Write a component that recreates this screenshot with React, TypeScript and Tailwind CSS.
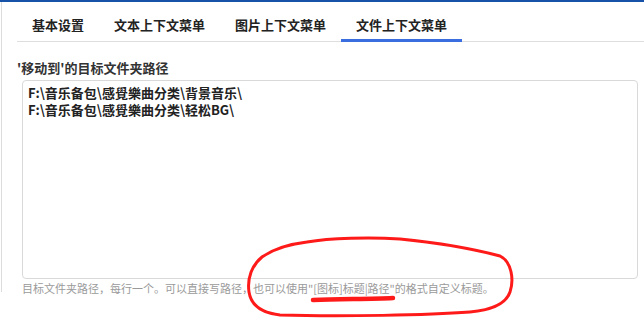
import React from 'react';

const tabs = ['基本设置', '文本上下文菜单', '图片上下文菜单', '文件上下文菜单'];
const active = 3;

const paths = 'F:\\音乐备包\\感覺樂曲分类\\背景音乐\\\nF:\\音乐备包\\感覺樂曲分类\\轻松BG\\';

export default function App() {
  return (
    <div className="relative w-[644px] h-[318px] overflow-hidden bg-white font-['Noto_Sans_CJK_SC','Microsoft_YaHei',sans-serif] text-[#222]">
      <div className="h-[2px] bg-[#1552a8]" />
      <div className="ml-[1px] h-[290px] border-l border-[#dcdcdc] pl-[15px]">
        <div className="flex border-b border-[#dedede]">
          {tabs.map((t, i) => (
            <div key={t} className="relative flex h-[39px] items-center px-[15px] pt-[6px] text-[13px] font-bold leading-[17px]">
              {t}
              {i === active && <div className="absolute left-0 right-0 bottom-[-1px] h-[3px] bg-[#3a6ee0]" />}
            </div>
          ))}
        </div>

        <div className="mt-[17px] text-[13px] font-bold leading-[17px] text-[#333]">'移动到'的目标文件夹路径</div>

        <textarea
          readOnly
          value={paths}
          className="mt-[4px] ml-[5px] block h-[199px] w-[616px] resize-none rounded-[4px] border border-[#d9d9d9] px-[5px] pt-[3px] text-[13px] font-bold leading-[17px] text-[#222] outline-none"
        />

        <div className="mt-[2px] ml-[5px] text-[11px] leading-[15px] text-[#9a9a9a] whitespace-nowrap">
          目标文件夹路径，每行一个。可以直接写路径，也可以使用"[图标]标题|路径"的格式自定义标题。
        </div>
      </div>

      {/* red hand-drawn annotation */}
      <svg className="absolute left-0 top-0 pointer-events-none" width="644" height="318" viewBox="0 0 644 318">
        <path
          d="M307 242 C330 238 370 237 400 239 C430 242 470 248 500 256 C512 262 514 280 510 292 C506 304 492 310 470 312 C430 315 340 317 280 315 C262 313 251 305 249 292 C247 278 252 265 262 257 C275 248 290 244 307 242"
          fill="none"
          stroke="#ff1a1a"
          strokeWidth="3"
          strokeLinecap="round"
        />
        <path d="M313 300 C340 299 370 299 393 298" fill="none" stroke="#ff1a1a" strokeWidth="4.5" strokeLinecap="round" />
      </svg>
    </div>
  );
}
